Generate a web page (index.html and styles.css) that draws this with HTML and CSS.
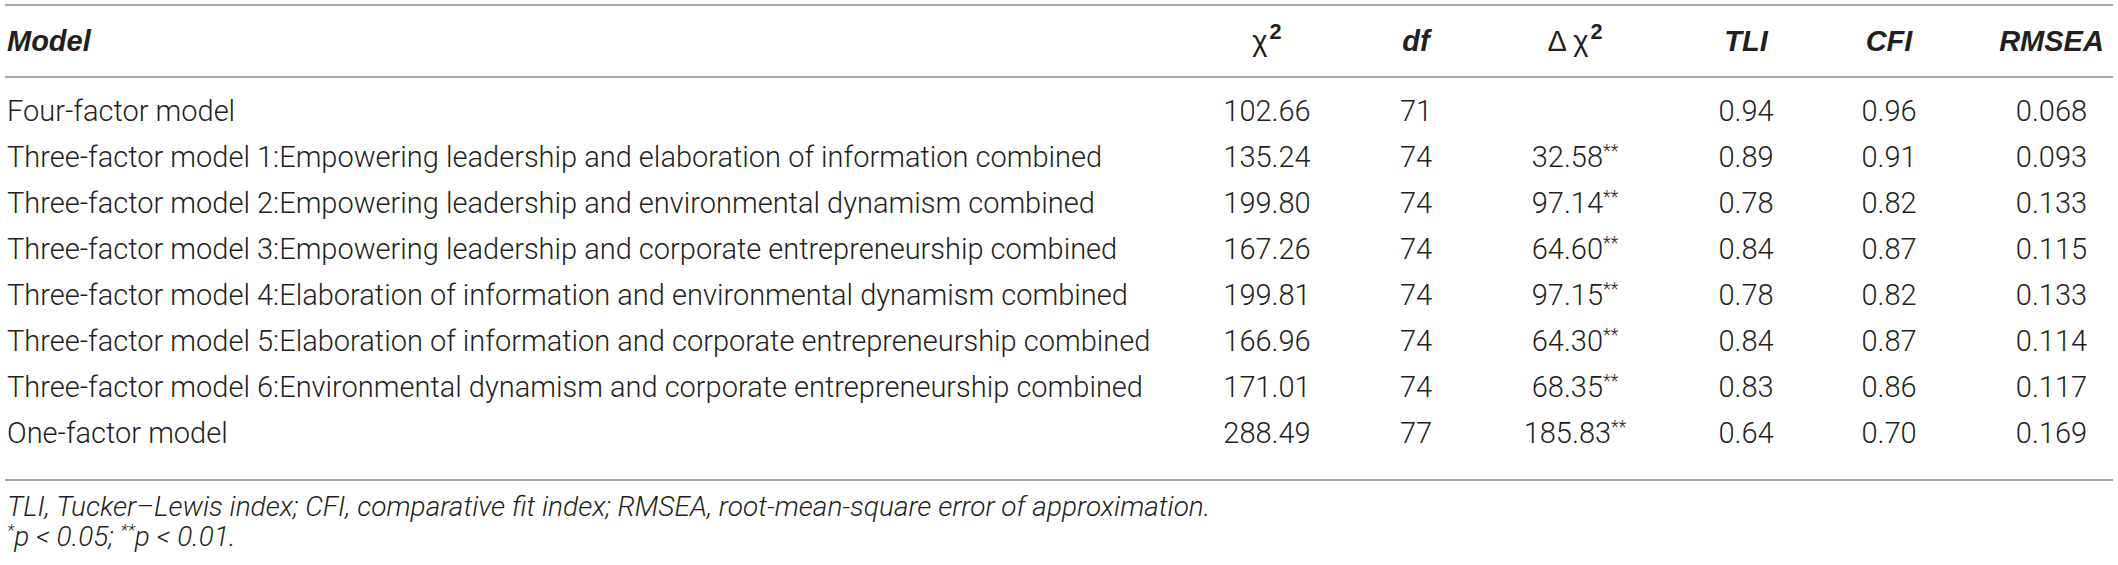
FILE: index.html
```html
<!DOCTYPE html>
<html lang="en">
<head>
<meta charset="utf-8">
<title>Model fit comparison</title>
<link rel="stylesheet" href="styles.css">
</head>
<body>
<div class="wrap">
  <table class="fit">
    <colgroup>
      <col class="c-model">
      <col class="c-chi">
      <col class="c-df">
      <col class="c-dchi">
      <col class="c-tli">
      <col class="c-cfi">
      <col class="c-rmsea">
    </colgroup>
    <thead>
      <tr>
        <th class="left"><b><i>Model</i></b></th>
        <th><span class="greek">χ</span><sup class="sq">2</sup></th>
        <th><b><i>df</i></b></th>
        <th><span class="greek">Δ χ</span><sup class="sq">2</sup></th>
        <th><b><i>TLI</i></b></th>
        <th><b><i>CFI</i></b></th>
        <th><b><i>RMSEA</i></b></th>
      </tr>
    </thead>
    <tbody>
      <tr class="first">
        <td class="left">Four-factor model</td>
        <td>102.66</td><td>71</td><td></td><td>0.94</td><td>0.96</td><td>0.068</td>
      </tr>
      <tr>
        <td class="left">Three-factor model 1:Empowering leadership and elaboration of information combined</td>
        <td>135.24</td><td>74</td><td>32.58<span class="sig">**</span></td><td>0.89</td><td>0.91</td><td>0.093</td>
      </tr>
      <tr>
        <td class="left">Three-factor model 2:Empowering leadership and environmental dynamism combined</td>
        <td>199.80</td><td>74</td><td>97.14<span class="sig">**</span></td><td>0.78</td><td>0.82</td><td>0.133</td>
      </tr>
      <tr>
        <td class="left">Three-factor model 3:Empowering leadership and corporate entrepreneurship combined</td>
        <td>167.26</td><td>74</td><td>64.60<span class="sig">**</span></td><td>0.84</td><td>0.87</td><td>0.115</td>
      </tr>
      <tr>
        <td class="left">Three-factor model 4:Elaboration of information and environmental dynamism combined</td>
        <td>199.81</td><td>74</td><td>97.15<span class="sig">**</span></td><td>0.78</td><td>0.82</td><td>0.133</td>
      </tr>
      <tr>
        <td class="left">Three-factor model 5:Elaboration of information and corporate entrepreneurship combined</td>
        <td>166.96</td><td>74</td><td>64.30<span class="sig">**</span></td><td>0.84</td><td>0.87</td><td>0.114</td>
      </tr>
      <tr>
        <td class="left">Three-factor model 6:Environmental dynamism and corporate entrepreneurship combined</td>
        <td>171.01</td><td>74</td><td>68.35<span class="sig">**</span></td><td>0.83</td><td>0.86</td><td>0.117</td>
      </tr>
      <tr class="last">
        <td class="left">One-factor model</td>
        <td>288.49</td><td>77</td><td>185.83<span class="sig">**</span></td><td>0.64</td><td>0.70</td><td>0.169</td>
      </tr>
    </tbody>
  </table>
  <div class="notes">
    <p>TLI, Tucker–Lewis index; CFI, comparative fit index; RMSEA, root-mean-square error of approximation.</p>
    <p><span class="sig">*</span>p &lt; 0.05; <span class="sig">**</span>p &lt; 0.01.</p>
  </div>
</div>
</body>
</html>
```
FILE: styles.css
```css
html, body {
  margin: 0;
  padding: 0;
  background: #ffffff;
}

body {
  font-family: "Roboto", "Liberation Sans", Arial, sans-serif;
  font-weight: 300;
  color: #231f20;
}

.wrap {
  padding: 4px 5px 0 5px;
}

.fit {
  width: 2108px;
  table-layout: fixed;
  border-collapse: separate;
  border-spacing: 0;
  font-size: 29px;
}

.c-model { width: 1143px; }
.c-chi { width: 238px; }
.c-df { width: 60px; }
.c-dchi { width: 258px; }
.c-tli { width: 84px; }
.c-cfi { width: 202px; }
.c-rmsea { width: 123px; }

.fit th,
.fit td {
  padding: 0;
  text-align: center;
  white-space: nowrap;
  overflow: visible;
}

.fit th {
  height: 70px;
  line-height: 70px;
  border-top: 2px solid #a5a5a5;
  border-bottom: 2px solid #a5a5a5;
  font-weight: 700;
  font-family: "Liberation Sans", Arial, sans-serif;
  color: #231f20;
}

.fit th b { font-weight: 700; }

.fit .left {
  text-align: left;
  padding-left: 2px;
}

.greek {
  font-family: "Liberation Sans", Arial, sans-serif;
  font-weight: 400;
}

.sq {
  font-weight: 700;
  font-size: 0.75em;
  line-height: 0;
  vertical-align: 0.55em;
  margin-left: 2px;
}

.fit td {
  line-height: 46px;
}

.fit tr.first td { padding-top: 10px; }

.fit tr.last td {
  padding-bottom: 23px;
  border-bottom: 2px solid #a5a5a5;
}

.sig {
  font-size: 0.62em;
  line-height: 0;
  vertical-align: 0.55em;
}

.notes {
  margin-top: 11px;
  padding-left: 2px;
  font-size: 28px;
  font-style: italic;
  line-height: 30px;
}

.notes p {
  margin: 0;
}
```
